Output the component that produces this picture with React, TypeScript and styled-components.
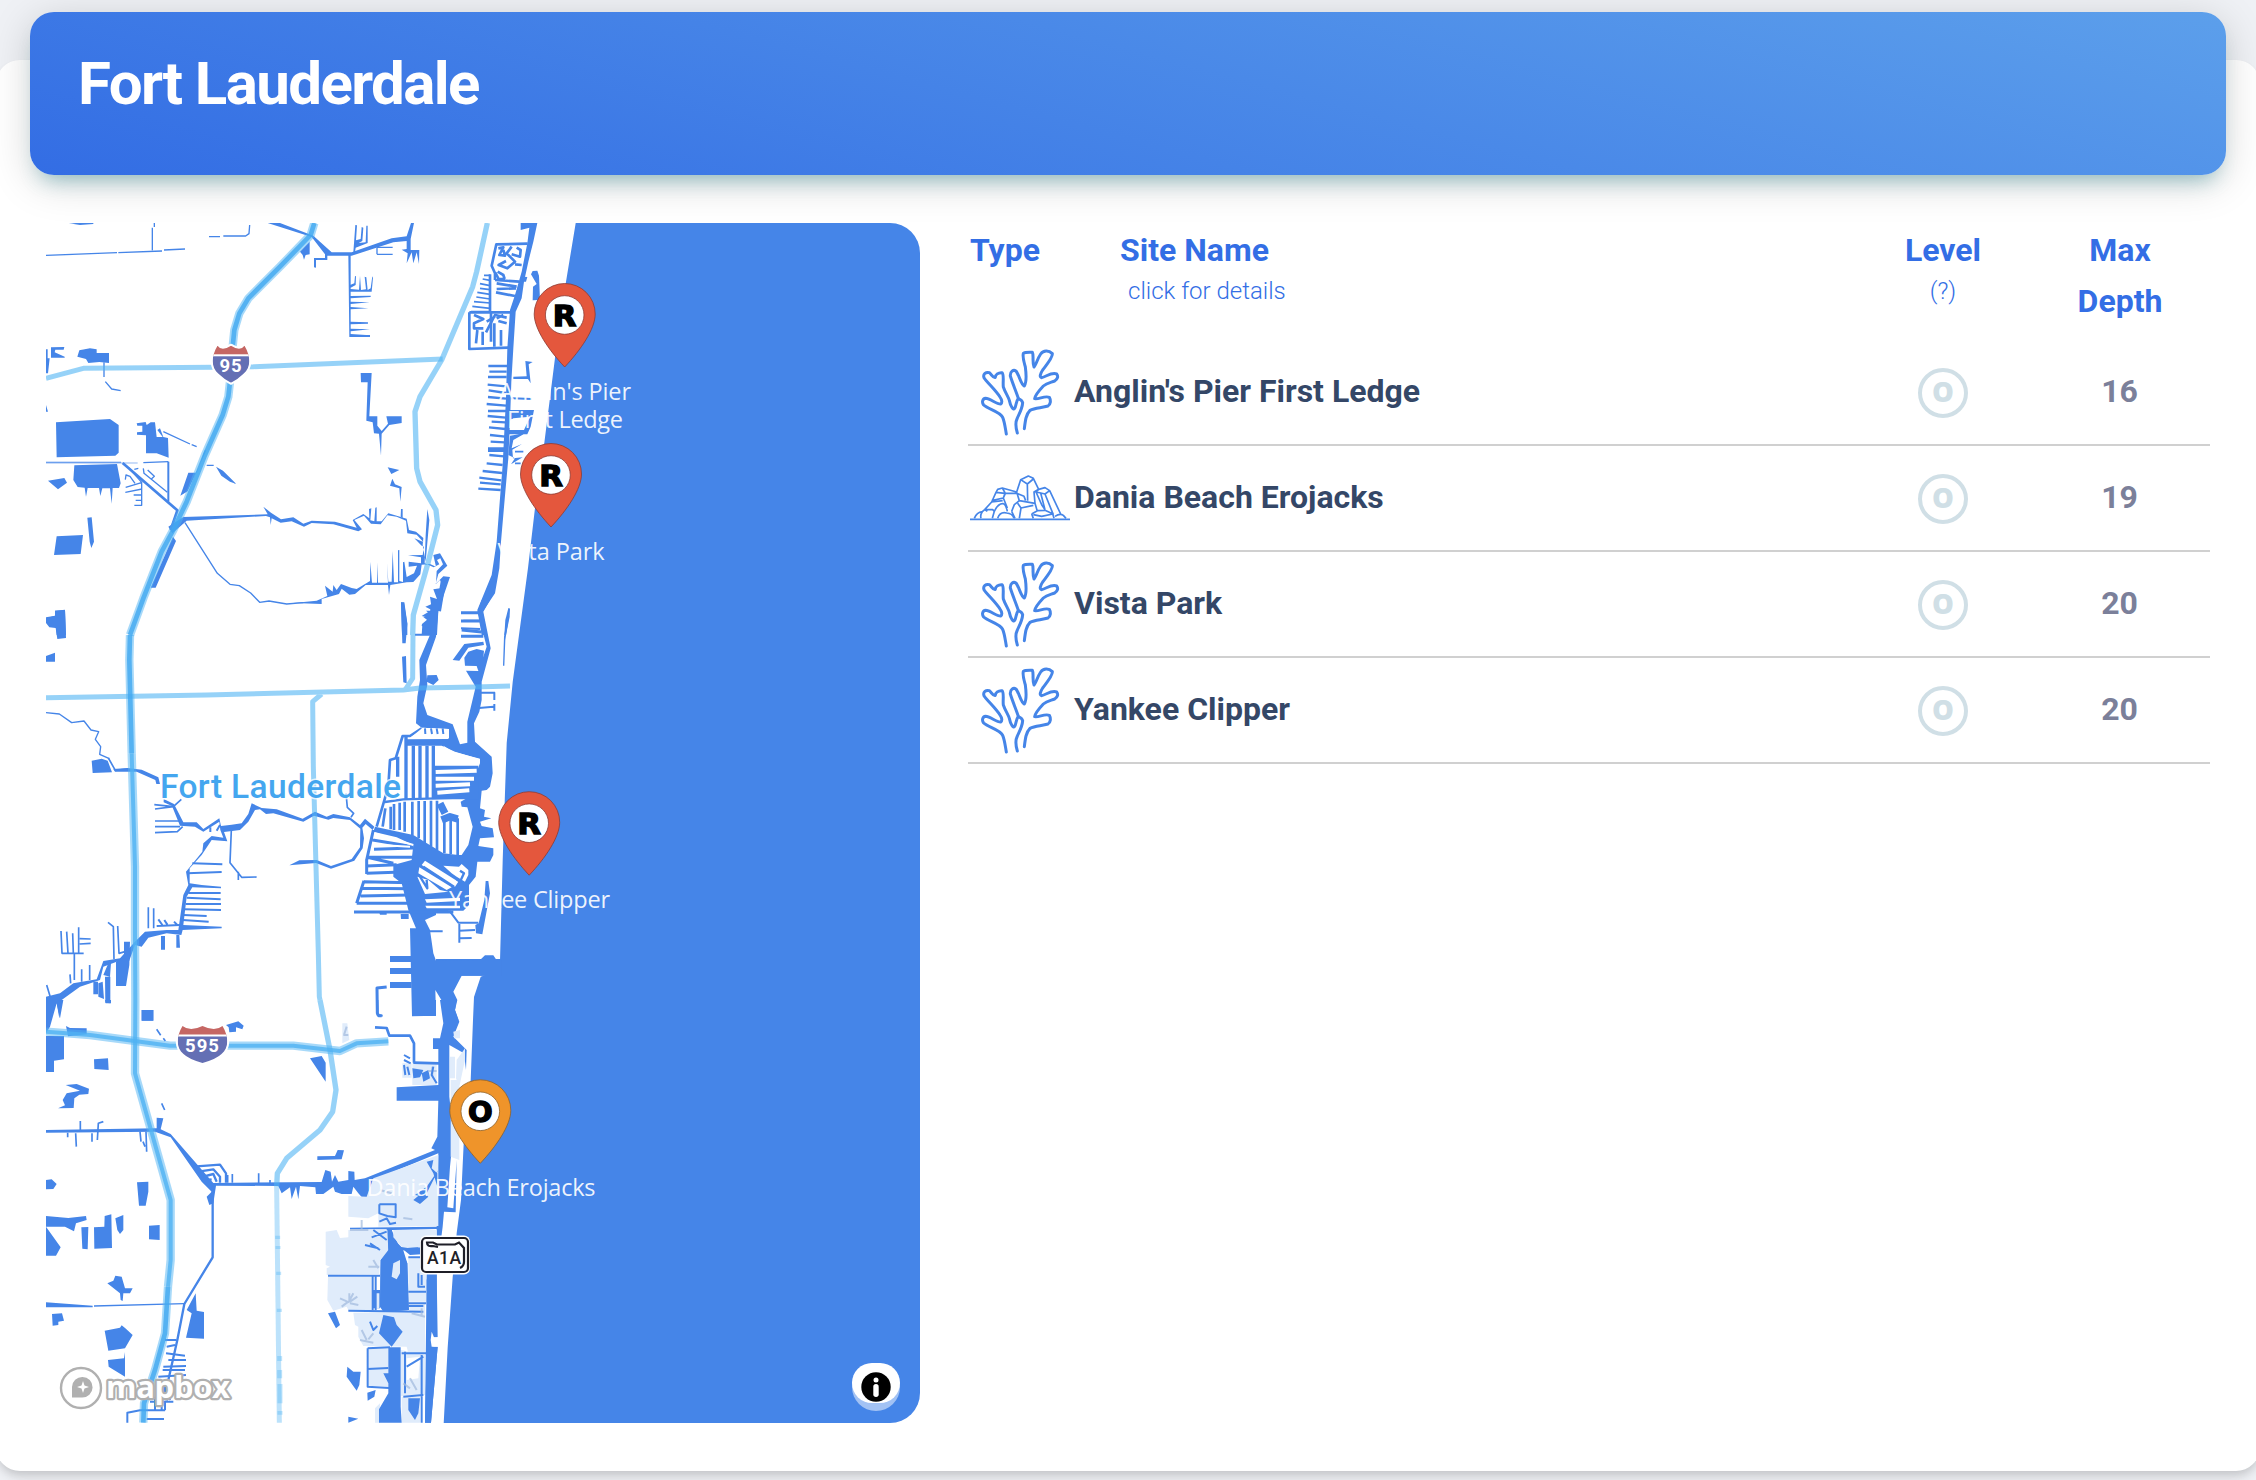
import React from "react";
import styled, { createGlobalStyle } from "styled-components";

const WATER = "#4585e8";
const PARK = "#e0ecfb";
const ROAD = "#50b4f4";

const GlobalStyle = createGlobalStyle`
  body { margin: 0; background: #eff1f5; font-family: Roboto, "Liberation Sans", sans-serif; }
  *, *::before, *::after { box-sizing: border-box; }
`;

const Page = styled.main`
  height: 1480px;
  padding-top: 60px;
  overflow: hidden;
`;

const Card = styled.section`
  height: 1411px;
  margin: 0 -4px;
  background: #fff;
  border-radius: 24px;
  box-shadow: 0 8px 12px -2px rgba(0, 0, 0, 0.13), 0 4px 8px -2px rgba(0, 0, 0, 0.08);
`;

const Banner = styled.header`
  position: relative;
  top: -48px;
  height: 163px;
  margin: 0 34px;
  padding: 35px 48px;
  border-radius: 24px;
  background: linear-gradient(195deg, #5c9feb, #336de4);
  box-shadow: 0 8px 40px rgba(0, 0, 0, 0.17), 0 14px 20px -10px rgba(40, 150, 165, 0.44);
`;

const Title = styled.h1`
  margin: 0;
  color: #fff;
  font-size: 60px;
  line-height: 74px;
  font-weight: 700;
  letter-spacing: -1.6px;
`;

const Body = styled.div`
  display: flex;
  gap: 48px;
  padding: 0 50px;
`;

const MapFrame = styled.div`
  position: relative;
  flex: none;
  width: 874px;
  height: 1200px;
  border-radius: 30px;
  overflow: hidden;
`;

const MapSvg = styled.svg`
  display: block;
`;

const InfoButton = styled.button`
  position: absolute;
  right: 20px;
  bottom: 12px;
  display: flex;
  align-items: flex-start;
  width: 48px;
  height: 48px;
  padding: 0;
  border: 0;
  border-radius: 24px;
  background: rgba(255, 255, 255, 0.5);
`;

const InfoFace = styled.span`
  display: flex;
  width: 48px;
  height: 40px;
  padding-top: 9px;
  justify-content: center;
  border-radius: 20px;
  background: #fff;
`;

const Sites = styled.div`
  flex: 1;
`;

const Row = styled.div`
  display: grid;
  grid-template-columns: 106px 1fr 174px 180px;
  align-items: center;
  height: 106px;
  border-bottom: 2px solid #d0d0d0;
`;

const HeadRow = styled(Row)`
  align-items: start;
  height: 117px;
  padding-top: 2px;
  border: 0;
`;

const Head = styled.div<{ $center?: boolean; $indent?: number }>`
  padding-left: ${(p) => p.$indent ?? 0}px;
  color: #336ee5;
  font-size: 32px;
  line-height: 51px;
  font-weight: 700;
  text-align: ${(p) => (p.$center ? "center" : "left")};
`;

const Hint = styled.div<{ $indent?: number }>`
  margin-top: -1px;
  padding-left: ${(p) => p.$indent ?? 0}px;
  font-size: 24px;
  line-height: 32px;
  font-weight: 300;
`;

const IconCell = styled.div<{ $left: number }>`
  display: flex;
  padding-left: ${(p) => p.$left}px;
  padding-bottom: 1px;
`;

const Name = styled.div`
  color: #344767;
  font-size: 32px;
  line-height: 50px;
  font-weight: 700;
  padding-bottom: 2px;
`;

const Level = styled.div`
  display: flex;
  align-items: center;
  justify-content: center;
  justify-self: center;
  width: 50px;
  height: 50px;
  margin-top: 2px;
  padding-bottom: 3px;
  border: 4px solid #d0dfe6;
  border-radius: 50%;
  color: #d0dfe6;
  font: 800 27.5px/1 "Open Sans", sans-serif;
`;

const Depth = styled.div`
  text-align: center;
  color: #7b809a;
  font-size: 32px;
  line-height: 50px;
  font-weight: 700;
  padding: 0 1px 2px 0;
`;

const Tile: React.FC<{ x: number; y: number; children: React.ReactNode }> = ({ x, y, children }) => (
  <g transform={`translate(${x} ${y}) scale(.33333)`}>{children}</g>
);

const Fill: React.FC<{ d: string; c?: string }> = ({ d, c = WATER }) => <path d={d} fill={c} />;
const Line: React.FC<{ d: string; w: number; c?: string; o?: number }> = ({ d, w, c = WATER, o = 1 }) => (
  <path d={d} fill="none" stroke={c} strokeWidth={w} opacity={o} strokeLinejoin="round" />
);

const Highway: React.FC<{ d: string; soft?: boolean }> = ({ d, soft }) => (
  <>
    <Line d={d} w={25} c={ROAD} o={0.5} />
    <Line d={d} w={soft ? 12 : 14} c={soft ? "#50b2f3" : "#41a7f0"} o={0.8} />
  </>
);

const Northwest = () => (
  <Tile x={40} y={215}>
    <Fill d="M82 24H160V27L120 30ZM683 24H720L820 62L875 112H935L1055 70L1100 64L1113 24H1122L1112 72V105H1138L1137 147L1130 112L1120 145L1115 112L1100 145L1103 115L1085 104L1100 102V78L1060 82L935 122H862V135H828V158L822 157V129H855V118L815 66ZM780 110L809 80V118L797 120L792 134L788 120Z" />
    <Line d="M337 38V106M343 24V36M507 65H540M550 63H617L627 56L629 30M18 121L231 113M235 113L366 108M372 105L435 102M1011 97H1058M1011 118H1058M1011 97V118M192 442V486M196 500L215 522L242 527M18 742H243M310 743L385 740M370 650L450 687M455 689L470 695M500 751H521M435 923L532 1075L570 1108L598 1112L632 1134L659 1162L687 1158L740 1167L790 1163" w={4} />
    <Line d="M18 744H293" w={3} c="#93b9f2" />
    <Fill d="M925 118H932V360H990V366H928ZM940 112L946 30L951 31L948 76L962 72L965 36L970 38L967 78L956 84L977 82L979 32H983V84L947 98L945 112ZM930 210L943 205L945 183L948 184L947 210L932 218ZM932 222L957 224L960 182L963 225L978 223L974 185L979 187L983 225L992 220L997 184L999 188L995 230H932ZM932 243L992 242V246L932 250ZM932 260L989 262L932 267ZM932 276L985 280L932 283ZM932 320L984 322V326L932 328ZM932 341L990 343L932 349ZM932 357L990 361V365H932Z" />
    <Fill d="M33 397L73 396L71 404H46L44 412L74 425V428H33ZM18 403H23V430H29L24 475H18ZM112 425L118 406L150 400L170 403V414H207V444L178 441L145 444L138 432ZM18 570L24 590H18ZM48 622L210 612L236 630V713L226 722L50 727ZM290 625L317 621L320 630L332 622H345L350 666L368 666L352 645L360 640L370 666L384 669L386 728L350 715H318V661L291 659V652L307 650V632H292ZM103 751L231 747L242 805L237 819H218L215 866L210 820H187L181 843L177 819H143L138 845L134 818L113 816L100 795ZM24 797L73 789L81 803L54 823ZM142 908L155 907L162 980L154 999L149 980ZM50 964L129 960L122 1017L42 1020ZM45 1187L75 1185L78 1260H50L47 1232L25 1230L18 1210L46 1202Z" />
    <Line d="M248 744L412 886L392 945" w={8} />
    <Line d="M385 740V860" w={6} />
    <Line d="M265 757L305 802V871H283M257 817L307 802M256 832L306 822M281 840H306M287 856H306M310 760L312 775L382 832M323 765L343 784L335 791M256 794L258 780L270 784L285 805M283 763L295 760" w={4} />
    <Fill d="M445 773H470L494 706H499L443 829L421 842ZM528 755L549 767L589 807L570 800L544 782ZM399 965L408 978L347 1118H332ZM385 935L397 955L440 917L678 903L690 907L692 930L695 910L722 923L755 919L792 935L815 924L880 928L955 949L966 943L943 915L972 902L993 926L1022 928L1042 901L1070 905L1098 917L1102 955L1130 959L1150 981L1123 970L1145 992L1152 995L1148 1020L1104 1021L1143 1027V1045L1106 1040V1055L1131 1052L1122 1075L1100 1086L1093 1040L1089 1042V1101L1078 1098V1005L1074 1006V1102H1062L1058 1008L1055 1100H1045L1041 1042L1044 1103H1014L1011 1042V1103H996L991 1040L990 1098L950 1122L935 1119L903 1107L890 1125L880 1110L878 1130L855 1112L862 1143L830 1157L760 1164L845 1167V1152L897 1137L905 1121L928 1139L945 1137L977 1110L1044 1110L1047 1140L1051 1110L1100 1102L1120 1101L1141 1078L1145 1049L1170 1047L1188 1055L1180 1020L1200 1015L1222 1052L1195 1077L1187 1107L1210 1084L1230 1086L1195 1188L1191 1260H1145L1147 1230L1174 1225L1150 1206L1174 1201L1158 1187H1176L1170 1145L1191 1152L1180 1123L1211 1118L1200 1095L1188 1107L1190 1068L1209 1048L1201 1030L1191 1035L1198 1048L1181 1057L1154 1045L1157 960L1162 882L1168 915L1157 1040L1148 990L1150 969L1128 950L1107 945L1100 911L1045 895L1025 919H1010V877L1006 878L1003 919L991 916L994 880L987 882L988 910L970 897L938 915L950 938L885 920L815 917L790 926L760 907L723 913L693 893L670 875L683 898L430 906Z" />
    <Fill d="M962 474H995L988 604H1012V632L1025 648L1044 626L1039 604H1085V624L1048 630L1025 656L1023 722L1017 656L1002 655L998 622L979 617L983 502H963ZM1043 757L1078 765L1054 777ZM1057 791L1065 808L1085 816L1081 860L1078 820L1050 812ZM1083 882H1088V910L1082 905ZM1083 1162H1093L1102 1225V1260H1086Z" />
    <Line d="M1210 1100L1195 1188" w={16} />
  </Tile>
);

const Northeast = () => (
  <Tile x={400} y={215}>
    <Fill d="M362 24H412L400 80L385 140L372 200L365 250L347 290L340 400L334 500L330 620L325 730L316 830L303 980L298 1060L285 1135L248 1190L262 1260H245L232 1185L275 1080L290 980L300 850L308 750L318 550L322 400L330 285L345 240L365 170L382 85L388 38L362 45Z" />
    <Line d="M383 86L289 88L275 152L285 175V195M270 178V295M275 292H340M208 292V402L325 398M208 292L275 292M273 292V380" w={8} />
    <Line d="M295 100L310 97L298 120L315 122L310 105M335 95L320 115L345 140L322 160L296 150L318 138M350 98L362 105L360 125L335 118M345 148L365 150M286 173L296 192L315 190M293 170L310 180L314 192M290 205L350 215M290 222L348 220M288 232L345 243M285 195L358 200" w={8} />
    <Line d="M252 181H270M248 192L270 196M240 206L270 212M240 220L270 224M232 232L270 238M229 246L270 252M222 260L270 264M217 274L270 280M213 290H270" w={5} />
    <Line d="M222 300L250 312L222 325V340H250M232 345L228 385M248 350V390M258 352L285 300L320 308M260 320L285 305M283 325V395M295 318L320 325M303 345V392M290 310L310 300" w={8} />
    <Line d="M265 453H322M268 470H320M264 486H320M263 509L318 514M266 526L318 534M264 546L318 551M260 567L318 572M264 588H318M263 603L318 608M275 620L316 622M267 637L316 642M270 660L316 665M272 680L314 682M266 704L312 706M268 720L312 724M260 745L308 750M248 768L306 774M238 788L304 796M240 803L302 808M235 821L302 825" w={7} />
    <Fill d="M264 697H312V711H264ZM398 168L412 167L417 182L420 255L398 256L399 215L410 207L393 178ZM368 185L382 186L378 200H368ZM376 438L398 441L386 448L392 505L384 492H340V485L380 484ZM326 585L402 585L392 635L382 658H320V645H372L390 605L340 610L325 620ZM330 662L376 655L340 675L335 700L366 687L337 704L339 730L368 727L333 748L345 730L325 720Z" />
    <Line d="M335 550L395 552" w={6} />
    <Line d="M345 710H370M345 745H362" w={5} />
    <Fill d="M325 1180H329V1205L318 1260H313L316 1215Z" />
    <Line d="M183 1194H235M190 1217H240M183 1240L240 1242" w={6} />
  </Tile>
);

const Midwest = () => (
  <Tile x={40} y={600}>
    <Fill d="M45 32L75 29L78 114L52 117L47 84L28 82L18 69V52L45 47ZM18 168L45 158V185H18ZM1083 7L1092 8L1102 72L1097 130H1087ZM1086 170L1098 168L1100 250L1090 247ZM155 482L185 476L203 482L216 517L158 519Z" />
    <Line d="M18 338L58 342L95 368L132 363L153 390L176 395L166 418L182 440L179 463L208 476" w={4} />
    <Line d="M205 474L226 511L263 507M343 614L400 620M345 627L400 620L424 598M345 663H422M345 680H420M345 698L412 695L428 680M574 690L570 788L605 832L650 831M595 815V840M918 580L922 622L941 640L933 652" w={5} />
    <Fill d="M220 507L263 504L305 509L355 532L360 552H349L346 540L290 515L225 515ZM371 597L402 612L430 667H470L490 687L538 655L543 678L575 674L605 670L625 642L635 610L665 624L710 628L788 656L825 635L860 650L880 642L930 652L960 675L975 656L1003 680L998 690L977 672L967 683L972 715L968 745L943 782L873 806L828 789L748 796L778 781L830 780L873 798L935 777L960 742L961 686L930 660L880 654L865 659L822 647L790 665L700 640L678 642L660 628L645 630L625 665L600 690L552 696L562 724L515 720L485 765L449 805V850L485 855L543 860V865L457 862L440 890L430 975L545 980V985L428 990L424 1005L380 1000L325 1013L305 1040L285 1035L265 1090L230 1085L190 1100L180 1140L120 1160L65 1200L58 1255L50 1210H30L18 1260V1190L60 1180L100 1150L170 1138L190 1083L240 1075L285 1025L315 995L380 990L415 990L430 885L445 855L438 815L487 755L490 730L515 708L550 713L541 690L538 665L490 695L465 680L420 677L396 618L371 607Z" />
    <Line d="M457 790L547 793M442 820L545 816M445 879H542M440 893L542 898M437 912H543M432 928L543 930M430 945L500 948M428 960L506 965M350 978L420 975M355 958L367 975M373 960L382 974M402 965L412 975M511 682V696M530 692L540 675" w={6} />
    <Line d="M325 922V985M341 925V985M204 967L220 980L222 1078M233 978L237 1060L255 1055M63 993L66 1060H131M80 995L84 1060M98 1000L100 1060M116 982V1060M119 1016L152 1017M119 1032L152 1030M103 1062V1140M90 1123L92 1150M125 1108V1145M149 1095V1140M20 1155L32 1195" w={5} />
    <Fill d="M252 1025H270L268 1095L258 1158H228V1085L252 1070ZM363 1008H375V1049H363ZM409 1005H418L420 1043H409ZM160 1145H174V1183H160ZM175 1150L188 1145L192 1197L175 1190ZM195 1130H211V1210L196 1208ZM205 1090H213L210 1130L190 1125Z" />
    <Fill d="M305 1230H340V1262H305Z" />
  </Tile>
);

const Isles = () => (
  <Tile x={330} y={600}>
    <Fill d="M455 0H480L460 35L482 145L455 245V300L448 335L432 370L435 425L485 470L488 520L480 560L470 570L455 572L450 625L465 630L462 650L484 655L450 665L455 678L488 685L492 712L450 715L445 738L490 745V765L480 785H442L437 830L417 855V915L400 932L360 932L318 937V945L285 960L300 990L310 1060L318 1082L450 1080L465 1066H490L498 1078H515V1127H395L370 1175L382 1200L375 1230L385 1260H342L340 1210L316 1170L318 1248H246L240 985H258L235 930L215 850L190 830V795L245 780L250 735L200 712L130 695L135 680L250 705L340 760L385 765L395 765L415 735L428 680L412 622L395 620L392 605L418 590L430 540L450 490V478L375 455L335 437H228V418L355 417V387L275 383L258 370L262 290L270 240L268 180L302 100L298 50L305 0H335L325 30L318 110L288 195L292 255L280 310L292 345L368 373L390 433L412 428V365L437 260L408 212L445 213L470 140L443 35Z" />
    <Fill d="M368 180L403 132L460 125L462 135L415 143L388 182ZM403 173L415 155L440 147L462 152L458 195L445 213L440 198L405 197ZM292 226L320 225L326 240L310 255L290 245ZM536 25L540 28L526 120L523 197H519L522 110ZM276 72L300 52V85L275 78ZM275 48L300 33L302 55ZM286 20L305 12V30Z" />
    <Line d="M393 38H450M393 63H455M395 90L455 96M393 109H460" w={9} />
    <Line d="M255 104H305M450 278H495M447 324L490 320M493 277V300M493 312V332M358 932L385 968H445M388 972V1028M388 992L435 990M388 1015L425 1014M300 994H338" w={6} />
    <Fill d="M467 843H475L480 880L457 1003L438 1000L436 975L446 970L463 900Z" />
    <Line d="M275 385L240 408H218L197 475L180 480L175 560L140 680" w={8} />
    <Line d="M228 410V600M203 470V530" w={10} />
    <Line d="M250 437V598M270 437V598M291 437V598M310 437V598" w={10} />
    <Fill d="M278 383L357 387V415L240 414Z" c="#fff" />
    <Line d="M285 385L286 402M303 385L306 402M320 385L323 402M338 385L340 402" w={6} />
    <Fill d="M315 497H445V598H315Z" />
    <Line d="M317 516L440 512M317 536H432M317 557L420 553M322 578L418 571" w={12} c="#fff" />
    <Fill d="M340 437L370 455L450 476V486L355 467Z" c="#fff" />
    <Line d="M165 606L220 598L418 592" w={7} />
    <Line d="M166 625L158 680M182 620V688M192 612V690M209 608V690M224 605V695M247 605V705M266 603V715M284 603V730M303 602V740M321 602V750M343 650V760M362 655V762M383 655V765" w={8} />
    <Line d="M330 610L345 640M335 660L360 650L383 657" w={22} />
    <Line d="M190 790L112 772M132 748L250 744M110 772H250M110 778V822M110 798L200 794M110 820L195 817M102 845L240 848M95 865L240 866M92 888L240 885M80 910L240 910M72 936H370M102 842L80 910M130 690L110 780M128 720L250 740" w={9} />
    <Line d="M133 700L250 735M150 735L240 740" w={6} c="#fff" />
    <Fill d="M285 782L385 845L375 860L275 795ZM262 830L295 840L330 870L355 875L285 882ZM268 802L365 862L350 870L265 820ZM340 797L387 800L395 792L415 810V825L405 845L380 830L365 820ZM285 898L390 893V903L290 908ZM286 917L390 917V925H290Z" c="#fff" />
    <Line d="M280 800L372 860M270 830L292 865L290 840M380 838L390 845L402 820L390 812" w={7} />
    <Line d="M180 1077H245M180 1113H245M180 1155H245" w={18} />
    <Line d="M155 1247H146L142 1240L141 1164L170 1161" w={9} />
    <Fill d="M212 942H236V957H213ZM147 935H170V944H150Z" />
  </Tile>
);

const Southwest = () => (
  <Tile x={40} y={1000}>
    <Fill d="M18 0H70L60 55L50 10L30 80L18 100ZM195 0H213V10H197ZM18 108H72V178L42 182V216H18ZM78 78L90 84L140 85V103L84 109ZM162 178L204 175L206 210L163 207ZM77 255L110 252L147 266L145 282L118 284L103 295L101 324L54 325L75 316L68 300L80 280L120 272ZM305 30H340V62H305ZM558 75L595 64L611 77L607 88L588 82V95L568 97L566 82ZM810 175L845 168L857 188V245ZM18 390L350 385V353L370 355L362 388L392 402L520 549L845 546L856 510L872 515L876 545L885 525L895 545L925 540V513L943 515L944 540L975 535L1185 450L1174 445L1192 410L1195 302H1070V262L1195 255V147H1179V115H1200L1210 70L1200 0H1250L1245 30L1258 65L1240 110L1280 150L1278 210L1272 160L1228 135V290L1240 400L1250 390L1245 475L1235 450L1230 500L1222 622L1240 625L1250 480L1247 637L1212 635L1208 680L1190 820L1193 1012H1180V1040H1193L1173 1268H1155L1162 1000L1160 840L1190 740V687L1055 690L1080 745L1102 790L1105 930L1035 935L1020 920L1022 780L1045 755L1040 688H930V683L1190 680L1195 460L1000 540L995 625L985 600L975 602L955 580L940 560L935 582H905L885 575L880 560L850 582H828L826 562L780 558L775 598L768 560L755 597L750 562L725 580L715 558L528 557L520 610L508 615L500 590L515 575L485 545L392 412L345 395L18 398Z" />
    <Line d="M121 363V392M172 420L175 370L190 365M156 400V425M107 400L109 440M83 398V412M300 395L303 425M318 395L320 455M309 425L315 440M365 310L374 330M350 88L362 106M370 115L376 123M656 520V550M563 525V548M577 522V548M690 540V550" w={5} />
    <Line d="M460 500L540 494L558 520V548M475 515L520 508L540 530V548M490 530L520 522L530 545M503 540L515 538" w={7} />
    <Fill d="M832 469L885 468L893 450L912 451L905 478L832 480ZM18 540L35 538L50 552L40 567L18 568ZM291 547L325 545V575L317 617H297ZM18 648L85 654L138 648L140 660L108 670L102 694L75 680H18ZM18 680L62 742L48 767H18ZM124 682L145 681L143 748L127 746ZM162 682L193 680L194 648L214 643L216 744L163 746ZM226 655L250 645V690L240 702L232 690ZM327 677L359 675V720L327 718ZM202 850L220 842L226 827L245 830L255 865H278L270 880L250 880L248 903L242 900L240 880ZM18 907L158 917V922L18 922ZM36 942L66 940L72 962L55 965V975L38 977ZM194 992L240 983L245 976L256 985L278 1005L255 1045L205 1052ZM204 1080L252 1075L255 1056V1130L206 1100ZM467 880L470 932L492 936V1016L438 1013L455 940L440 930Z" />
    <Line d="M518 560V772L433 912L412 1020L385 1140" w={7} />
    <Line d="M162 918L433 911" w={4} />
    <Line d="M375 1020H410M380 1040L405 1035M378 1060L435 1067M385 1080H438M370 1100L438 1098M368 1110H435M355 1130L438 1125M380 1160L390 1200M330 1205L400 1205M345 1190V1230M365 1190V1230M262 1268V1238L300 1231H375M375 1202V1231M320 1257H372" w={6} />
    <Line d="M385 1140L372 1200" w={24} />
  </Tile>
);

const Preserve = () => (
  <Tile x={40} y={1000}>
    <Fill c={PARK} d="M907 70H922L928 120L907 130ZM1087 190H1115V233H1087ZM1117 190H1190V255H1117ZM1230 170H1245V235H1230ZM1250 180L1275 145V180L1258 260L1248 235ZM1232 240H1258V480L1232 470ZM1000 535L1195 465V678L1015 680V640L985 655L925 650V588L980 590ZM857 695L890 690L900 714L925 712V690H1045V755L1020 780L1018 822L860 825V805L870 800L857 795ZM1060 690L1190 690V740L1090 745L1060 712ZM864 830H995V932L925 930L920 920L880 932L862 900ZM1105 775H1158V905H1105ZM1108 912H1155V935H1108ZM940 938L1155 935V1058L1105 1060L1100 1040L970 1038L955 1010V980L945 975ZM985 1045H1045V1160L985 1157ZM1083 1050L1155 1065V1185L1083 1188ZM1005 1225L1020 1210V1268H1005ZM1085 1190H1140V1268H1085ZM1240 95L1260 90V115H1243Z" />
    <Fill c="#fff" d="M1100 1075L1140 1070L1135 1135L1100 1140Z" />
    <Fill d="M1120 600L1150 575L1165 590L1140 612ZM1195 510L1155 590L1125 585L1160 560ZM1160 485L1180 480L1175 505L1192 520V560L1180 520ZM1117 205L1150 210L1140 232L1120 235ZM1145 220L1165 210L1170 235L1150 245Z" />
    <Line d="M1018 613H1067V652L1042 648L1018 640V613M1018 665L1040 655L1050 672L1068 668" w={6} />
    <Line d="M975 735L1015 745M995 712L1040 695M1000 690L1040 720M990 730L1020 750M1060 740L1155 755M1060 750L1135 745M864 827H1020M998 828V930M1007 830V930M925 932L1150 935M1105 875H1158M1105 910H1158M1105 918H1150M1105 772H1145M1135 820V860H1155M1145 825V855M990 965L1000 990L1012 978M1085 1060H1160M983 1045V1160L1060 1165M983 1045L1050 1042M983 1107L1045 1104M1095 1055V1180M1100 1100L1150 1070M1145 1065V1268M1090 1190L1150 1185" w={6} />
    <Fill d="M1022 780L1045 750L1042 690H1056V712L1088 745L1102 790L1107 930L1030 935L1020 920ZM1030 945L1062 952L1070 975L1088 995L1055 1040L1017 1000ZM1045 1042H1082V1220L1085 1268H1017V1228L1045 1180V1150L1030 1120H1045ZM1160 820L1190 815V1012H1178V1040H1193L1173 1268H1155ZM1105 1195H1140L1135 1240L1125 1260L1105 1230ZM864 940L885 935L900 975L888 985ZM922 1100L940 1115H962L958 1155L950 1172L920 1130ZM982 1178L1007 1170L1003 1190L983 1202ZM925 1250L955 1256L925 1268ZM998 870H1020V925H998ZM1085 745L1190 740V760L1110 765Z" />
    <Fill c={PARK} d="M1060 790L1080 780V820L1070 838L1055 830ZM1010 880H1018V925H1010Z" />
    <Fill c="#fff" d="M1175 995L1182 1012H1195V1040H1175L1172 1020Z" />
    <Line c="#9fb9dd" o={0.7} w={6} d="M928 905V880M922 905L900 895M925 905L905 920M930 905L952 890M930 910L955 915M925 908L940 880M930 690H985M965 660V690M985 800H1018M1000 780L1015 805M965 990L980 1020M985 1018L1000 1000M960 1020L1000 1028M1115 940L1155 950M1145 925V950M1090 1150L1110 1165M1110 1135L1130 1170M1090 654L1117 658M1165 213H1190M1177 200V228M1020 570L1055 580M910 105H925M920 80L912 105" />
    <Line d="M1005 82L1040 84L1048 107H1110L1122 130V188" w={8} />
    <Line d="M1120 188L1198 190" w={8} />
    <Line d="M1012 0L1013 45L1028 47M1092 165L1110 175M1092 180L1112 190M1092 195L1096 225M1102 200L1108 225M1180 200L1175 225L1190 250" w={6} />
    <Fill d="M1116 0H1188V47L1116 49Z" />
  </Tile>
);

const Ocean = () => (
  <>
    <path
      fill={WATER}
      d="M575.7 223L566 281.7L555 358L544.3 443L535 508L528 568L519 635L512.7 682L506.7 743L502.7 860L500 961L488 974L480.7 976.7L474 997L473 1020L470.7 1080L464 1137L461 1200L456.7 1233L452.7 1277L447.7 1347L443.7 1423H920V223Z"
    />
    <path fill={WATER} d="M436 959H502V975.7H436Z" />
  </>
);

const Roads = () => (
  <>
    <Tile x={40} y={215}>
      <Line c={ROAD} o={0.6} w={15} d="M18 490L130 460L520 457L640 455L1208 432" />
      <Highway d="M823 24L812 60L720 155L625 250L598 295L583 345L578 395L570 500L565 545L548 600L495 720L440 860L400 945L365 1010L310 1150L270 1260" />
    </Tile>
    <Tile x={400} y={215}>
      <Line c={ROAD} o={0.6} w={16} d="M262 24L230 170L218 215L125 435L60 545L45 590L50 760L60 800L108 885L113 930L85 1040L40 1200L38 1260" />
    </Tile>
    <Tile x={40} y={600}>
      <Line c={ROAD} o={0.6} w={15} d="M18 293L500 285L1090 270L1140 264L1305 261L1410 258M1119 105L1118 235L1095 270M845 282L818 305L820 500L828 800L835 1060L838 1190L840 1200" />
      <Highway d="M270 105L268 180L275 460" />
      <Highway soft d="M275 460L285 800L285 1000L286 1200" />
    </Tile>
    <Tile x={40} y={1000}>
      <Line c={ROAD} o={0.6} w={16} d="M840 0L870 150L888 270L878 335L840 390L740 475L712 520L710 560" />
      <Line c={ROAD} o={0.38} w={15} d="M710 560L718 1268" />
      <Line c={ROAD} o={0.35} w={15} d="M713 707V717M714 738V747M716 815V825M718 926V936M719 1068V1083M719 1110V1135M720 1152V1210M720 1233V1244" />
      <Highway soft d="M18 95L150 105L390 137H760L900 153L950 130L1045 124" />
      <Highway soft d="M286 0L285 220L330 380L392 600V780L384 860" />
      <Highway d="M384 860L375 1000L345 1110L312 1210L310 1268" />
    </Tile>
  </>
);

const Shield: React.FC<{ x: number; y: number; w: number; label: string }> = ({ x, y, w, label }) => {
  const h = w / 2;
  const shape = `M${-h + 5}-18Q${-h / 2}-12 0-18Q${h / 2}-12 ${h - 5}-18C${h + 2}-6 ${h + 1} 4 ${h - 6} 10Q${h - 11} 15 0 19Q${-h + 11} 15 ${-h + 6} 10C${-h - 1} 4 ${-h - 2}-6 ${-h + 5}-18Z`;
  const id = `shield-${label}`;
  return (
    <g transform={`translate(${x} ${y})`}>
      <path d={shape} fill="#fff" stroke="#fff" strokeWidth="4" strokeLinejoin="round" />
      <clipPath id={id}>
        <path d={shape} />
      </clipPath>
      <g clipPath={`url(#${id})`}>
        <rect x={-h} y="-20" width={w} height="12" fill="#c56663" />
        <rect x={-h} y="-8" width={w} height="30" fill="#646fb4" />
        <rect x={-h} y="-9.5" width={w} height="2" fill="#fff" />
      </g>
      <text y="8" fill="#fff" textAnchor="middle" fontFamily="Roboto, sans-serif" fontWeight="700" fontSize="18.5" letterSpacing="1">
        {label}
      </text>
    </g>
  );
};

const Pin: React.FC<{ x: number; y: number; color: string; edge: string; letter: string; stretch?: number }> = ({ x, y, color, edge, letter, stretch = 1 }) => (
  <g transform={`translate(${x} ${y})`}>
    <path d="M0 0C-16-17-30.5-38-30.5-53A30.5 30.5 0 0 1 30.5-53C30.5-38 16-17 0 0Z" fill={color} stroke={edge} strokeWidth="0.8" />
    <circle cy="-52" r="19.3" fill="#fff" stroke={edge} strokeWidth="0.8" />
    <text
      transform={`translate(0 -41.3) scale(${stretch} 1)`}
      textAnchor="middle"
      fontFamily="'DejaVu Sans', sans-serif"
      fontWeight="700"
      fontSize="29"
      stroke="#000"
      strokeWidth="1.4"
    >
      {letter}
    </text>
  </g>
);

const Label: React.FC<{ x: number; y: number; w: number; children: string }> = ({ x, y, w, children }) => (
  <text x={x} y={y + 0.5} textLength={w} textAnchor="middle" fill="#fff" fillOpacity="0.92" fontFamily="'Open Sans', 'Noto Sans', sans-serif" fontSize="23.5">
    {children}
  </text>
);

const RouteA1A = () => (
  <g transform="translate(445 1255)">
    <rect x="-25" y="-19.5" width="50" height="39" rx="6" fill="#fff" />
    <rect x="-23" y="-17" width="46" height="34" rx="4" fill="#fff" stroke="#1f1f28" strokeWidth="2.2" />
    <path d="M-7-8L-12-9Q-18-8-18-12.500H-12L-8-10.500H10L14-12.500L19-7V7Q19 11 15 13" fill="none" stroke="#1f1f28" strokeWidth="2.2" />
    <text x="-1" y="9" textAnchor="middle" textLength="34" fontFamily="Roboto, sans-serif" fontWeight="500" fontSize="17.5" fill="#1f1f28">
      A1A
    </text>
  </g>
);

const MapboxMark = () => (
  <g>
    <circle cx="81" cy="1388" r="20" fill="#fff" fillOpacity="0.9" stroke="#b0b0b0" strokeWidth="2.4" />
    <path d="M72 1397.500V1387A10.300 10.300 0 1 1 82 1397.500Z" fill="#b0b0b0" />
    <path d="M83 1381L84.500 1385.500L89 1387L84.500 1388.500L83 1393L81.500 1388.500L77 1387L81.500 1385.500Z" fill="#fff" />
    <text x="106" y="1397.500" textLength="124" fontFamily="'Open Sans', sans-serif" fontWeight="700" fontSize="31" fill="#fff" stroke="#b0b0b0" strokeWidth="4.500" strokeLinejoin="round" paintOrder="stroke">
      mapbox
    </text>
  </g>
);

const SiteMap = () => (
  <MapFrame>
    <MapSvg width="874" height="1200" viewBox="46 223 874 1200">
      <rect x="46" y="223" width="874" height="1200" fill="#fff" />
      <Ocean />
      <Northwest />
      <Northeast />
      <Midwest />
      <Isles />
      <Southwest />
      <Preserve />
      <Roads />
      <text x="160" y="798" textLength="241" fill="#44a6ef" stroke="#fff" strokeOpacity="0.75" strokeWidth="3" paintOrder="stroke" fontFamily="Roboto, sans-serif" fontWeight="500" fontSize="33.500">
        Fort Lauderdale
      </text>
      <Shield x={231} y={363.800} w={37} label="95" />
      <Shield x={202.500} y={1044} w={50} label="595" />
      <RouteA1A />
      <Label x={565} y={399} w={132}>Anglin's Pier</Label>
      <Label x={565} y={427.500} w={116}>First Ledge</Label>
      <Label x={551} y={559} w={107}>Vista Park</Label>
      <Label x={529.500} y={907.500} w={161}>Yankee Clipper</Label>
      <Label x={481} y={1195} w={229}>Dania Beach Erojacks</Label>
      <Pin x={564.700} y={367} color="#e4573d" edge="#8d3b34" letter="R" stretch={1.06} />
      <Pin x={551} y={527} color="#e4573d" edge="#8d3b34" letter="R" stretch={1.06} />
      <Pin x={529.200} y={875.200} color="#e4573d" edge="#8d3b34" letter="R" stretch={1.06} />
      <Pin x={480.300} y={1163.300} color="#ef942a" edge="#8f6127" letter="O" />
      <MapboxMark />
    </MapSvg>
    <InfoButton aria-label="Attribution">
      <InfoFace>
        <svg width="30" height="30" viewBox="0 0 30 30">
          <circle cx="15" cy="15" r="14.700" />
          <circle cx="15" cy="8" r="2.500" fill="#fff" />
          <rect x="12.300" y="12" width="5.400" height="13" rx="2.700" fill="#fff" />
        </svg>
      </InfoFace>
    </InfoButton>
  </MapFrame>
);

const Coral = () => (
  <svg width="80" height="88" viewBox="90 398 240 264" fill="none" stroke={WATER} strokeWidth="9" strokeLinecap="round" strokeLinejoin="round">
    <path d="M169 656C166 640 164 620 158 606C150 588 115 582 101 569C95 561 97 550 107 549C120 549 140 567 152 566C158 562 155 552 150 545C138 525 110 500 102 487C98 476 108 469 118 472C125 478 130 489 136 486C136 478 145 471 156 472C163 478 158 500 160 515C165 530 175 545 178 555C182 575 190 584 193 580C200 572 196 560 205 549C199 530 188 505 181 482C180 468 190 462 198 467C208 480 213 508 223 512C230 500 228 470 226 455C222 440 217 425 220 414C225 410 240 411 247 411C252 420 246 440 252 455C258 450 262 430 272 416C280 405 296 404 307 415C309 425 290 448 278 464C270 476 268 486 275 487C290 483 305 470 320 476C326 483 322 492 314 497C300 502 290 503 280 512C265 528 255 540 254 550C265 553 285 540 298 546C303 555 302 568 294 572C275 578 255 577 240 585C228 597 226 615 223 640" />
    <path d="M202 653C198 640 196 620 202 608C208 595 217 580 218 562C216 555 210 552 205 550" />
  </svg>
);

const Rocks = () => (
  <svg width="100" height="47" viewBox="60 778 300 141" fill="none" stroke={WATER} strokeWidth="5" strokeLinejoin="round">
    <path d="M60 914H360" />
    <path d="M73 911Q80 893 97 891L104 885H128L133 890M97 891Q90 900 93 911M104 885L125 862L138 833L143 824L157 820L200 832L212 795L235 784L250 791L266 824L258 832L275 870L285 885M266 824L285 819L299 828L332 898M212 795L232 808L250 793M232 808L233 858M143 824L138 833L165 836L160 850L125 858M157 820L166 836H200L222 845L227 858M166 836L160 850L172 880M125 862L158 858M133 890L127 911M133 890Q145 865 160 867Q168 870 172 890M143 911Q150 890 170 895Q187 896 192 911M200 832L208 858M185 890L193 870L208 858L255 866L262 890M203 866L213 880L250 872M213 880L208 911M185 890L195 911M255 866L252 832L266 824M272 835L285 838L299 828M285 838L310 900M245 898L262 888L285 887L308 897L312 911M245 898L250 911M250 900L275 905L308 898M315 905Q330 895 340 902L348 911M104 885L112 890M258 832L272 835L285 885" />
  </svg>
);

type Site = { name: string; depth: number; kind: "coral" | "rocks" };

const SITES: Site[] = [
  { name: "Anglin's Pier First Ledge", depth: 16, kind: "coral" },
  { name: "Dania Beach Erojacks", depth: 19, kind: "rocks" },
  { name: "Vista Park", depth: 20, kind: "coral" },
  { name: "Yankee Clipper", depth: 20, kind: "coral" },
];

export default function App() {
  return (
    <>
      <GlobalStyle />
      <Page>
        <Card>
          <Banner>
            <Title>Fort Lauderdale</Title>
          </Banner>
          <Body>
            <SiteMap />
            <Sites>
              <HeadRow>
                <Head $indent={2}>Type</Head>
                <Head $indent={46}>
                  Site Name
                  <Hint $indent={8}>click for details</Hint>
                </Head>
                <Head $center>
                  Level
                  <Hint>(?)</Hint>
                </Head>
                <Head $center>
                  Max
                  <br />
                  Depth
                </Head>
              </HeadRow>
              {SITES.map((site) => (
                <Row key={site.name}>
                  <IconCell $left={site.kind === "coral" ? 12 : 2}>{site.kind === "coral" ? <Coral /> : <Rocks />}</IconCell>
                  <Name>{site.name}</Name>
                  <Level>O</Level>
                  <Depth>{site.depth}</Depth>
                </Row>
              ))}
            </Sites>
          </Body>
        </Card>
      </Page>
    </>
  );
}
